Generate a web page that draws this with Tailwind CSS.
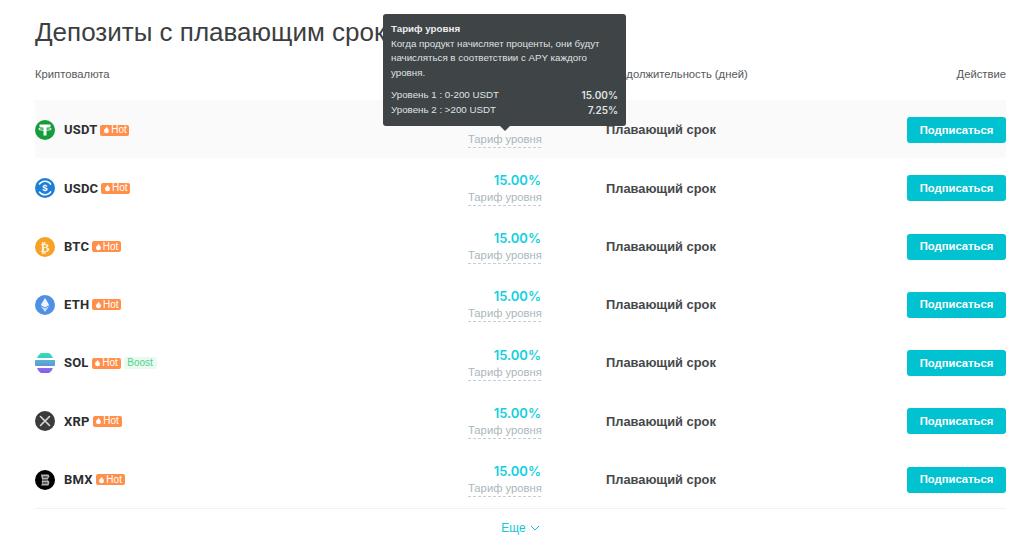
<!DOCTYPE html>
<html lang="ru">
<head>
<meta charset="utf-8">
<script src="https://cdn.jsdelivr.net/npm/@tailwindcss/browser@4"></script>
<title>Депозиты</title>
</head>
<body class="bg-white overflow-hidden font-['Liberation_Sans',sans-serif] text-[#3a3d40]">
<div class="relative w-[1024px] h-[541px] pl-[35px] pr-[18px] overflow-hidden">
  <h1 class="h-[46px] pt-[13px] text-[26px] leading-[38px] font-normal text-[#3c3f42] whitespace-nowrap">Депозиты с плавающим сроком</h1>
  <div class="flex items-center h-[54px] pt-[2px] text-[11.25px] text-[#55585c]">
    <div class="w-[571px]">Криптовалюта</div>
    <div class="flex-1 whitespace-nowrap">Продолжительность (дней)</div>
    <div class="text-right">Действие</div>
  </div>

  <div class="h-[58.25px] pt-[2px] flex items-center bg-[#fafafa]">
    <div class="w-[433px] flex items-center">
      <svg class="w-5 h-5" viewBox="0 0 20 20"><circle cx="10" cy="10" r="10" fill="#169c3c"/><path d="M4.500 4.500h11v2.400h-4V15.500H8.500V6.900h-4z" fill="#fff"/><ellipse cx="10" cy="9" rx="6.500" ry="1.300" fill="none" stroke="#fff" stroke-width=".9"/></svg>
      <span class="ml-[9px] text-[13px] font-bold font-['Roboto',sans-serif] text-[#2b2d31] tracking-[0.2px]">USDT</span>
      <span class="ml-[3px] h-[11px] w-[29px] flex items-center justify-center rounded-[2px] bg-[#ff8f4a] text-white text-[10px] leading-none"><svg class="w-[7px] h-2 mr-[1px]" viewBox="0 0 8 8"><path d="M4 0c.4 1.600 2.800 2.500 2.800 5A2.800 2.800 0 0 1 1.200 5C1.200 3.700 2 3.300 2.300 2.300 3 2.700 3.800 1.500 4 0z" fill="#fff"/></svg>Hot</span>
    </div>
    <div class="w-[73px] text-right whitespace-nowrap">
      <div class="h-[18px]"></div>
      <span class="block mt-[1px] text-[11.25px] leading-[15px] text-[#a9b7bd] border-b border-dashed border-[#c3cfd4]">Тариф уровня</span>
    </div>
    <div class="ml-[65px] flex-1 text-[12.85px] font-bold text-[#45484b]">Плавающий срок</div>
    <button class="w-[99px] h-[26px] rounded-[3px] bg-[#00c2d1] text-white text-[11.25px] font-bold">Подписаться</button>
  </div>

  <div class="h-[58.25px] pt-[2px] flex items-center">
    <div class="w-[433px] flex items-center">
      <svg class="w-5 h-5" viewBox="0 0 20 20"><circle cx="10" cy="10" r="10" fill="#1f7fd6"/><circle cx="10" cy="10" r="6.800" fill="none" stroke="#fff" stroke-width="1.500" stroke-dasharray="14 7.400" stroke-dashoffset="-3.500"/><text x="10" y="13.300" font-size="9.500" text-anchor="middle" fill="#fff" font-family="Liberation Sans" font-weight="700">$</text></svg>
      <span class="ml-[9px] text-[13px] font-bold font-['Roboto',sans-serif] text-[#2b2d31] tracking-[0.2px]">USDC</span>
      <span class="ml-[3px] h-[11px] w-[29px] flex items-center justify-center rounded-[2px] bg-[#ff8f4a] text-white text-[10px] leading-none"><svg class="w-[7px] h-2 mr-[1px]" viewBox="0 0 8 8"><path d="M4 0c.4 1.600 2.800 2.500 2.800 5A2.800 2.800 0 0 1 1.200 5C1.200 3.700 2 3.300 2.300 2.300 3 2.700 3.800 1.500 4 0z" fill="#fff"/></svg>Hot</span>
    </div>
    <div class="w-[73px] text-right whitespace-nowrap">
      <div class="text-[13px] leading-[18px] font-semibold text-[#13d0e0] font-['Inter',sans-serif]">15.00%</div>
      <span class="block mt-[1px] text-[11.25px] leading-[15px] text-[#a9b7bd] border-b border-dashed border-[#c3cfd4]">Тариф уровня</span>
    </div>
    <div class="ml-[65px] flex-1 text-[12.85px] font-bold text-[#45484b]">Плавающий срок</div>
    <button class="w-[99px] h-[26px] rounded-[3px] bg-[#00c2d1] text-white text-[11.25px] font-bold">Подписаться</button>
  </div>

  <div class="h-[58.25px] pt-[2px] flex items-center">
    <div class="w-[433px] flex items-center">
      <svg class="w-5 h-5" viewBox="0 0 20 20"><circle cx="10" cy="10" r="10" fill="#f7a226"/><text x="10" y="14.500" font-size="13" text-anchor="middle" fill="#fff" font-family="DejaVu Sans" font-weight="700" opacity=".85">₿</text></svg>
      <span class="ml-[9px] text-[13px] font-bold font-['Roboto',sans-serif] text-[#2b2d31] tracking-[0.2px]">BTC</span>
      <span class="ml-[3px] h-[11px] w-[29px] flex items-center justify-center rounded-[2px] bg-[#ff8f4a] text-white text-[10px] leading-none"><svg class="w-[7px] h-2 mr-[1px]" viewBox="0 0 8 8"><path d="M4 0c.4 1.600 2.800 2.500 2.800 5A2.800 2.800 0 0 1 1.200 5C1.200 3.700 2 3.300 2.300 2.300 3 2.700 3.800 1.500 4 0z" fill="#fff"/></svg>Hot</span>
    </div>
    <div class="w-[73px] text-right whitespace-nowrap">
      <div class="text-[13px] leading-[18px] font-semibold text-[#13d0e0] font-['Inter',sans-serif]">15.00%</div>
      <span class="block mt-[1px] text-[11.25px] leading-[15px] text-[#a9b7bd] border-b border-dashed border-[#c3cfd4]">Тариф уровня</span>
    </div>
    <div class="ml-[65px] flex-1 text-[12.85px] font-bold text-[#45484b]">Плавающий срок</div>
    <button class="w-[99px] h-[26px] rounded-[3px] bg-[#00c2d1] text-white text-[11.25px] font-bold">Подписаться</button>
  </div>

  <div class="h-[58.25px] pt-[2px] flex items-center">
    <div class="w-[433px] flex items-center">
      <svg class="w-5 h-5" viewBox="0 0 20 20"><circle cx="10" cy="10" r="10" fill="#4e90e4"/><path d="M10 3l4.200 7L10 12.500 5.800 10z" fill="#fff" opacity=".9"/><path d="M10 13.500l4.200-2.500L10 17 5.800 11z" fill="#fff" opacity=".75"/></svg>
      <span class="ml-[9px] text-[13px] font-bold font-['Roboto',sans-serif] text-[#2b2d31] tracking-[0.2px]">ETH</span>
      <span class="ml-[3px] h-[11px] w-[29px] flex items-center justify-center rounded-[2px] bg-[#ff8f4a] text-white text-[10px] leading-none"><svg class="w-[7px] h-2 mr-[1px]" viewBox="0 0 8 8"><path d="M4 0c.4 1.600 2.800 2.500 2.800 5A2.800 2.800 0 0 1 1.200 5C1.200 3.700 2 3.300 2.300 2.300 3 2.700 3.800 1.500 4 0z" fill="#fff"/></svg>Hot</span>
    </div>
    <div class="w-[73px] text-right whitespace-nowrap">
      <div class="text-[13px] leading-[18px] font-semibold text-[#13d0e0] font-['Inter',sans-serif]">15.00%</div>
      <span class="block mt-[1px] text-[11.25px] leading-[15px] text-[#a9b7bd] border-b border-dashed border-[#c3cfd4]">Тариф уровня</span>
    </div>
    <div class="ml-[65px] flex-1 text-[12.85px] font-bold text-[#45484b]">Плавающий срок</div>
    <button class="w-[99px] h-[26px] rounded-[3px] bg-[#00c2d1] text-white text-[11.25px] font-bold">Подписаться</button>
  </div>

  <div class="h-[58.25px] pt-[2px] flex items-center">
    <div class="w-[433px] flex items-center">
      <svg class="w-5 h-5" viewBox="0 0 20 20"><defs><linearGradient id="sol" x1="0" y1="0" x2="0" y2="1"><stop offset="0" stop-color="#2fe3b0"/><stop offset=".5" stop-color="#5aa7d8"/><stop offset="1" stop-color="#9a4ff0"/></linearGradient></defs><path d="M6 0h8a9 9 0 0 1 4 5H2A9 9 0 0 1 6 0zM.3 7h19.400a10 10 0 0 1 0 6H.3a10 10 0 0 1 0-6zM2 15h16A9 9 0 0 1 14 20H6a9 9 0 0 1-4-5z" fill="url(#sol)"/></svg>
      <span class="ml-[9px] text-[13px] font-bold font-['Roboto',sans-serif] text-[#2b2d31] tracking-[0.2px]">SOL</span>
      <span class="ml-[3px] h-[11px] w-[29px] flex items-center justify-center rounded-[2px] bg-[#ff8f4a] text-white text-[10px] leading-none"><svg class="w-[7px] h-2 mr-[1px]" viewBox="0 0 8 8"><path d="M4 0c.4 1.600 2.800 2.500 2.800 5A2.800 2.800 0 0 1 1.200 5C1.200 3.700 2 3.300 2.300 2.300 3 2.700 3.800 1.500 4 0z" fill="#fff"/></svg>Hot</span>
      <span class="ml-[3px] h-[12px] w-[33px] flex items-center justify-center rounded-[2px] bg-[#e9fbf1] text-[#4fd18b] text-[10px] leading-none">Boost</span>
    </div>
    <div class="w-[73px] text-right whitespace-nowrap">
      <div class="text-[13px] leading-[18px] font-semibold text-[#13d0e0] font-['Inter',sans-serif]">15.00%</div>
      <span class="block mt-[1px] text-[11.25px] leading-[15px] text-[#a9b7bd] border-b border-dashed border-[#c3cfd4]">Тариф уровня</span>
    </div>
    <div class="ml-[65px] flex-1 text-[12.85px] font-bold text-[#45484b]">Плавающий срок</div>
    <button class="w-[99px] h-[26px] rounded-[3px] bg-[#00c2d1] text-white text-[11.25px] font-bold">Подписаться</button>
  </div>

  <div class="h-[58.25px] pt-[2px] flex items-center">
    <div class="w-[433px] flex items-center">
      <svg class="w-5 h-5" viewBox="0 0 20 20"><circle cx="10" cy="10" r="10" fill="#3a3b3d"/><path d="M5.500 5.500L10 10l4.500-4.500M5.500 14.500L10 10l4.500 4.500" fill="none" stroke="#d8d8d8" stroke-width="1.600" stroke-linecap="round"/></svg>
      <span class="ml-[9px] text-[13px] font-bold font-['Roboto',sans-serif] text-[#2b2d31] tracking-[0.2px]">XRP</span>
      <span class="ml-[3px] h-[11px] w-[29px] flex items-center justify-center rounded-[2px] bg-[#ff8f4a] text-white text-[10px] leading-none"><svg class="w-[7px] h-2 mr-[1px]" viewBox="0 0 8 8"><path d="M4 0c.4 1.600 2.800 2.500 2.800 5A2.800 2.800 0 0 1 1.200 5C1.200 3.700 2 3.300 2.300 2.300 3 2.700 3.800 1.500 4 0z" fill="#fff"/></svg>Hot</span>
    </div>
    <div class="w-[73px] text-right whitespace-nowrap">
      <div class="text-[13px] leading-[18px] font-semibold text-[#13d0e0] font-['Inter',sans-serif]">15.00%</div>
      <span class="block mt-[1px] text-[11.25px] leading-[15px] text-[#a9b7bd] border-b border-dashed border-[#c3cfd4]">Тариф уровня</span>
    </div>
    <div class="ml-[65px] flex-1 text-[12.85px] font-bold text-[#45484b]">Плавающий срок</div>
    <button class="w-[99px] h-[26px] rounded-[3px] bg-[#00c2d1] text-white text-[11.25px] font-bold">Подписаться</button>
  </div>

  <div class="h-[58.25px] pt-[2px] flex items-center">
    <div class="w-[433px] flex items-center">
      <svg class="w-5 h-5" viewBox="0 0 20 20"><circle cx="10" cy="10" r="10" fill="#000"/><path d="M6 4.500h7.500l1 2-2 3 2 2.500-1 3.500H6l1.500-2.500-1-1 1-2-1-2.500z" fill="#b5b5b5"/><path d="M8 7h4.500M8 10h4.500M8 13h4.500" stroke="#000" stroke-width="1"/></svg>
      <span class="ml-[9px] text-[13px] font-bold font-['Roboto',sans-serif] text-[#2b2d31] tracking-[0.2px]">BMX</span>
      <span class="ml-[3px] h-[11px] w-[29px] flex items-center justify-center rounded-[2px] bg-[#ff8f4a] text-white text-[10px] leading-none"><svg class="w-[7px] h-2 mr-[1px]" viewBox="0 0 8 8"><path d="M4 0c.4 1.600 2.800 2.500 2.800 5A2.800 2.800 0 0 1 1.200 5C1.200 3.700 2 3.300 2.300 2.300 3 2.700 3.800 1.500 4 0z" fill="#fff"/></svg>Hot</span>
    </div>
    <div class="w-[73px] text-right whitespace-nowrap">
      <div class="text-[13px] leading-[18px] font-semibold text-[#13d0e0] font-['Inter',sans-serif]">15.00%</div>
      <span class="block mt-[1px] text-[11.25px] leading-[15px] text-[#a9b7bd] border-b border-dashed border-[#c3cfd4]">Тариф уровня</span>
    </div>
    <div class="ml-[65px] flex-1 text-[12.85px] font-bold text-[#45484b]">Плавающий срок</div>
    <button class="w-[99px] h-[26px] rounded-[3px] bg-[#00c2d1] text-white text-[11.25px] font-bold">Подписаться</button>
  </div>

  <div class="border-t border-[#f2f2f2] h-[38px] pt-[2px] flex items-center justify-center gap-[4px] text-[12px] text-[#13c6d6]">
    <span>Еще</span>
    <svg class="w-[10px] h-[10px]" viewBox="0 0 10 10"><path d="M1 3l4 4 4-4" fill="none" stroke="#13c6d6" stroke-width="1"/></svg>
  </div>

  <div class="absolute left-[383px] top-[14px] w-[243px] h-[112px] rounded-[3px] bg-[#3f4446] text-[#dfe2e3] px-2 py-[8px] text-[9.75px] leading-[14.700px]">
    <div class="font-bold text-[#eceeef]">Тариф уровня</div>
    <p>Когда продукт начисляет проценты, они будут начисляться в соответствии с APY каждого уровня.</p>
    <div class="mt-[7px] flex justify-between"><span>Уровень 1 : 0-200 USDT</span><span class="text-[10px] font-semibold font-['Inter',sans-serif]">15.00%</span></div>
    <div class="flex justify-between"><span>Уровень 2 : &gt;200 USDT</span><span class="text-[10px] font-semibold font-['Inter',sans-serif]">7.25%</span></div>
    <div class="absolute left-1/2 -translate-x-1/2 bottom-[-5px] w-0 h-0 border-x-[5px] border-x-transparent border-t-[5px] border-t-[#3f4446]"></div>
  </div>
</div>
</body>
</html>
